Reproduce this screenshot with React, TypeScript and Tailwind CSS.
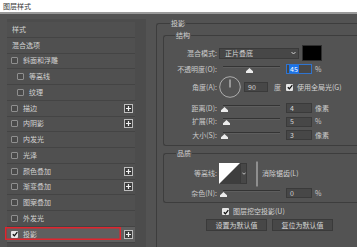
import React from 'react'

const FONT = '"Noto Sans CJK SC", "Noto Sans", sans-serif'

type Row = { label: string; check?: boolean; indent?: boolean; plus?: boolean; checked?: boolean; active?: boolean }

const rows: Row[] = [
    { label: '样式' },
    { label: '混合选项' },
    { label: '斜面和浮雕', check: true },
    { label: '等高线', check: true, indent: true },
    { label: '纹理', check: true, indent: true },
    { label: '描边', check: true, plus: true },
    { label: '内阴影', check: true, plus: true },
    { label: '内发光', check: true },
    { label: '光泽', check: true },
    { label: '颜色叠加', check: true, plus: true },
    { label: '渐变叠加', check: true, plus: true },
    { label: '图案叠加', check: true },
    { label: '外发光', check: true },
    { label: '投影', check: true, plus: true, checked: true, active: true },
]

function Box({ checked }: { checked?: boolean }) {
    if (checked) {
        return (
            <span className="w-[7px] h-[7px] rounded-[1px] bg-[#e6e6e6] flex items-center justify-center shrink-0">
                <svg width="6" height="6" viewBox="0 0 6 6">
                    <path d="M0.8 3.2 L2.4 4.8 L5.3 1.2" stroke="#111" strokeWidth="1.3" fill="none" />
                </svg>
            </span>
        )
    }
    return <span className="w-[7px] h-[7px] rounded-[1px] border border-[#8f8f8f] bg-[#4a4a4a] shrink-0" />
}

function PlusBox() {
    return (
        <svg width="9" height="9" viewBox="0 0 9 9" className="shrink-0">
            <rect x="0.5" y="0.5" width="8" height="8" fill="#3c3c3c" stroke="#bdbdbd" />
            <path d="M4.5 2 V7 M2 4.5 H7" stroke="#f0f0f0" strokeWidth="1.2" />
        </svg>
    )
}

function Slider({ value }: { value: number }) {
    return (
        <div className="ml-[6px] w-[57px] flex flex-col shrink-0">
            <div className="h-[2px] bg-[#343434] border-b border-[#5e5e5e]" />
            <svg width="7" height="5" viewBox="0 0 7 5" style={{ marginLeft: Math.round(value * 0.57) - 3 }}>
                <path d="M3.5 0 L7 3.2 L7 5 L0 5 L0 3.2 Z" fill="#ececec" />
            </svg>
        </div>
    )
}

function Field({ value, w = 'w-[26px]', ml = 'ml-[6px]' }: { value: string; w?: string; ml?: string }) {
    return (
        <div className={`${ml} ${w} h-[10px] bg-[#474747] border border-[#3a3a3a] flex items-center pl-[3px] text-[7px] leading-none text-[#d6d6d6] shrink-0`}>
            {value}
        </div>
    )
}

function Label({ children }: { children: React.ReactNode }) {
    return <span className="w-[53px] shrink-0 text-right text-[7px] leading-none text-[#c9c9c9] whitespace-nowrap">{children}</span>
}

function SliderRow({ label, value, pos, unit, h, mt }: { label: string; value: string; pos: number; unit: string; h: string; mt?: string }) {
    return (
        <div className={`flex items-center ${h} ${mt ?? ''}`}>
            <Label>{label}</Label>
            <Slider value={pos} />
            <Field value={value} />
            <span className="ml-[3px] text-[7px] leading-none text-[#c9c9c9]">{unit}</span>
        </div>
    )
}

export default function App() {
    return (
        <div className="w-[357px] h-[247px] overflow-hidden bg-[#535353] flex flex-col" style={{ fontFamily: FONT }}>
            <div className="h-[14px] shrink-0 bg-white border-b-2 border-[#9a9a9a] pl-[3px] flex items-center text-[7px] leading-none text-[#333]">
                图层样式
            </div>

            <div className="flex flex-1 min-h-0">
                {/* left list */}
                <div className="w-[148px] shrink-0 pl-[7px] pt-[5px]">
                    <div className="w-[139px] h-full bg-[#4c4c4c] pt-[3px]">
                        {rows.map((r) => (
                            <div
                                key={r.label}
                                className={`relative w-[128px] h-[15.75px] border-b border-[#444] flex items-center pr-[2px] ${r.active ? 'bg-[#5f5f5f]' : 'bg-[#505050]'}`}
                            >
                                {r.active && (
                                    <div className="absolute z-10 -left-[2px] top-0 w-[116px] h-[13px] shadow-[inset_0_0_0_1.5px_#e0252e] pointer-events-none" />
                                )}
                                <div className={`flex items-center gap-[5px] flex-1 ${r.check ? (r.indent ? 'pl-[10px]' : 'pl-[4px]') : 'pl-[5px]'}`}>
                                    {r.check && <Box checked={r.checked} />}
                                    <span className="text-[7px] leading-none text-[#d2d2d2]">{r.label}</span>
                                </div>
                                {r.plus && <PlusBox />}
                            </div>
                        ))}
                    </div>
                </div>

                {/* right panel */}
                <div className="flex-1 pl-[8px] pt-[9px]">
                    <div className="relative w-[260px] h-full border-l border-t border-[#3d3d3d] rounded-tl-[3px] flex flex-col">
                        <span className="absolute left-[13px] -top-[5px] bg-[#535353] px-[1px] text-[7px] leading-[9px] text-[#d0d0d0]">投影</span>

                        {/* 结构 */}
                        <div className="relative ml-[6px] mt-[11px] border-l border-t border-b border-[#3d3d3d] rounded-l-[3px] pt-[9px] pb-[3px]">
                            <span className="absolute left-[11px] -top-[5px] bg-[#535353] px-[1px] text-[7px] leading-[9px] text-[#d0d0d0]">结构</span>

                            <div className="flex items-center h-[16px]">
                                <Label>混合模式:</Label>
                                <div className="ml-[2px] w-[80px] h-[11px] bg-[#474747] border border-[#3a3a3a] flex items-center justify-between pl-[5px] pr-[2px] text-[7px] leading-none text-[#d6d6d6]">
                                    <span>正片叠底</span>
                                    <svg width="5" height="4" viewBox="0 0 5 4">
                                        <path d="M0.5 1 L2.5 3 L4.5 1" stroke="#cfcfcf" fill="none" />
                                    </svg>
                                </div>
                                <div className="ml-[3px] w-[20px] h-[16px] bg-black border border-[#2e2e2e]" />
                            </div>

                            <div className="flex items-center h-[14px] mt-[1px]">
                                <Label>不透明度(O):</Label>
                                <Slider value={45} />
                                <div className="ml-[6px] w-[26px] h-[10px] bg-[#474747] border border-[#2f74d0] flex items-center pl-[2px] shrink-0">
                                    <span className="bg-[#1b73e8] text-white text-[7px] leading-[8px] px-[1px]">45</span>
                                </div>
                                <span className="ml-[3px] text-[7px] leading-none text-[#c9c9c9]">%</span>
                            </div>

                            <div className="flex items-center h-[22px]">
                                <Label>角度(A):</Label>
                                <svg width="22" height="22" viewBox="0 0 22 22" className="ml-[2px] shrink-0">
                                    <circle cx="11" cy="11" r="10.3" fill="none" stroke="#b5b5b5" strokeWidth="0.9" />
                                    <path d="M11 3.5 V11.5" stroke="#dcdcdc" strokeWidth="1" />
                                </svg>
                                <Field value="90" w="w-[24px]" ml="ml-[3px]" />
                                <span className="ml-[6px] text-[7px] leading-none text-[#c9c9c9]">度</span>
                                <span className="ml-[5px]"><Box checked /></span>
                                <span className="ml-[4px] text-[7px] leading-none text-[#d2d2d2] whitespace-nowrap">使用全局光(G)</span>
                            </div>

                            <SliderRow label="距离(D):" value="4" pos={1} unit="像素" h="h-[14px]" mt="mt-[3px]" />
                            <SliderRow label="扩展(R):" value="5" pos={5} unit="%" h="h-[13px]" />
                            <SliderRow label="大小(S):" value="3" pos={1} unit="像素" h="h-[14px]" />
                        </div>

                        {/* 品质 */}
                        <div className="relative ml-[6px] mt-[7px] border-l border-t border-b border-[#3d3d3d] rounded-l-[3px] pt-[9px] pb-[2px]">
                            <span className="absolute left-[12px] -top-[5px] bg-[#535353] px-[1px] text-[7px] leading-[9px] text-[#d0d0d0]">品质</span>

                            <div className="flex items-center h-[21px]">
                                <Label>等高线:</Label>
                                <svg width="21" height="21" viewBox="0 0 21 21" className="ml-[2px] shrink-0">
                                    <rect width="21" height="21" fill="#3e3e3e" />
                                    <path d="M0 0 H21 L0 21 Z" fill="#ffffff" />
                                </svg>
                                <div className="w-[7px] h-[21px] bg-[#474747] border border-[#3a3a3a] flex items-center justify-center shrink-0">
                                    <svg width="4" height="3" viewBox="0 0 4 3">
                                        <path d="M0.3 0.6 L2 2.3 L3.7 0.6" stroke="#cfcfcf" fill="none" strokeWidth="0.9" />
                                    </svg>
                                </div>
                                <span className="ml-[9px]"><Box /></span>
                                <span className="ml-[4px] text-[7px] leading-none text-[#d2d2d2] whitespace-nowrap">消除锯齿(L)</span>
                            </div>

                            <SliderRow label="杂色(N):" value="0" pos={0} unit="%" h="h-[14px]" mt="mt-[2px]" />
                        </div>

                        <div className="flex items-center h-[9px] mt-[4px] ml-[65px]">
                            <Box checked />
                            <span className="ml-[4px] text-[7px] leading-none text-[#d2d2d2] whitespace-nowrap">图层挖空投影(U)</span>
                        </div>

                        <div className="flex gap-[5px] mt-[3px] ml-[49px]">
                            <button className="w-[61px] h-[12px] bg-[#474747] border border-[#3a3a3a] text-[7px] leading-none text-[#d6d6d6]">设置为默认值</button>
                            <button className="w-[61px] h-[12px] bg-[#474747] border border-[#3a3a3a] text-[7px] leading-none text-[#d6d6d6]">复位为默认值</button>
                        </div>
                    </div>
                </div>
            </div>
        </div>
    )
}
